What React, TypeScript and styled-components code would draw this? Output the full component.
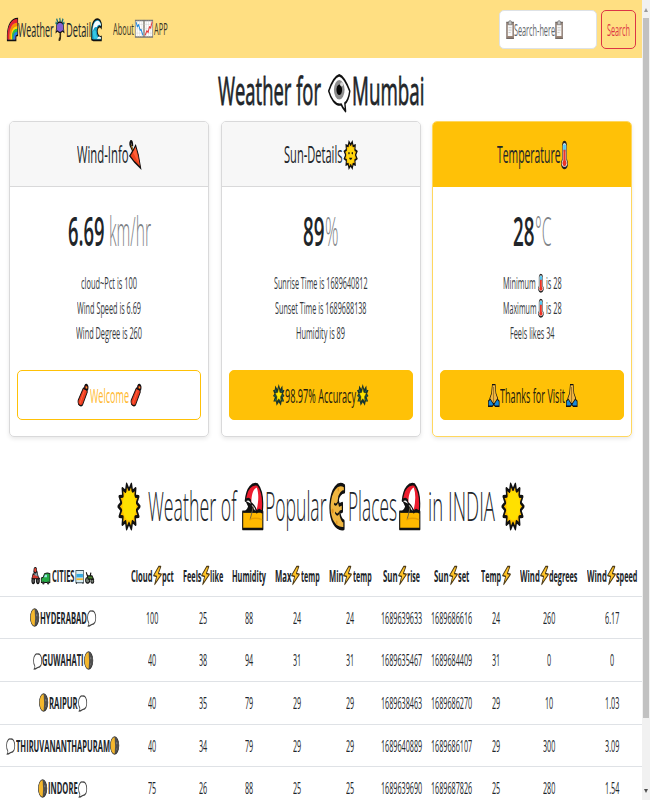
import React, { useLayoutEffect, useRef, useState } from "react";
import styled, { createGlobalStyle } from "styled-components";

const GlobalStyle = createGlobalStyle`
  * { box-sizing: border-box; }
  body { margin: 0; overflow: hidden; background: #fff; color: #212529; font-family: "Open Sans", "Noto Sans", sans-serif; }
`;

/* ---------- condensed text ---------- */

const FitBox = styled.span<{ $w: number }>`
  display: block;
  flex: none;
  width: ${(p) => p.$w}px;
  text-align: left;
`;

const FitText = styled.span`
  display: inline-block;
  vertical-align: top;
  white-space: pre;
  transform-origin: 0 50%;
`;

function Fit({ w, children }: { w: number; children: string }) {
  const ref = useRef<HTMLSpanElement>(null);
  const [scale, setScale] = useState(0.5);
  useLayoutEffect(() => {
    const el = ref.current;
    if (!el) return;
    el.style.transform = "none";
    const next = w / el.getBoundingClientRect().width;
    el.style.transform = `scaleX(${next})`;
    setScale(next);
  }, [w, children]);
  return (
    <FitBox $w={w}>
      <FitText ref={ref} style={{ transform: `scaleX(${scale})` }}>
        {children}
      </FitText>
    </FitBox>
  );
}

/* ---------- emoji drawings ---------- */

const K = "#111";

const sunRays = (n: number, r1: number, r2: number) =>
  Array.from({ length: n * 2 }, (_, i) => {
    const a = (i * Math.PI) / n - Math.PI / 2 + Math.PI / n;
    const r = i % 2 ? r2 : r1;
    return `${(16 + r * Math.cos(a)).toFixed(2)},${(16 + r * Math.sin(a)).toFixed(2)}`;
  }).join(" ");

const drawings: Record<string, React.ReactNode> = {
  rainbow: (
    <g>
      <path d="M1 31V24C2 10 12 1 31 1V24L26 25V31Z" fill="#8038c0" stroke={K} strokeWidth="2.5" />
      <g fill="none">
        <path d="M4 30V24C5 12 14 4 30 4" stroke="#e8222e" strokeWidth="5" />
        <path d="M9 30V24C10 15 17 9 30 9" stroke="#ff8c00" strokeWidth="5" />
        <path d="M13 30V24C14 18 20 13 30 13" stroke="#ffe000" strokeWidth="4" />
        <path d="M17 30V25C18 20 23 17 30 17" stroke="#28c840" strokeWidth="4" />
        <path d="M21 30V26C22 23 25 21 30 21" stroke="#1989e8" strokeWidth="4" />
      </g>
    </g>
  ),
  umbrella: (
    <g>
      <path d="M17 16V26Q17 31 12 29" fill="none" stroke="#3b2a12" strokeWidth="5" />
      <path d="M3 20L6 8Q16 3 26 8L29 20L24 18L19 20H13L8 18Z" fill="#8561d2" stroke={K} strokeWidth="2" />
      <path d="M5 1L9 6M15 0L17 5M26 1L22 6M2 6L7 9M30 6L25 9" stroke="#116d7a" strokeWidth="3.5" />
    </g>
  ),
  wave: (
    <g>
      <path d="M2 30V16C3 5 13 0 22 2C29 3 32 9 30 14C26 10 19 12 18 18C18 24 25 27 30 26V31H7Z" fill="#179fc6" stroke={K} strokeWidth="2.5" />
      <path d="M5 17C6 7 14 3 22 4C27 6 29 8 29 11C25 8 19 9 17 13C13 12 9 12 5 19Z" fill="#f4fbff" />
      <path d="M5 20C9 16 12 17 14 18C14 25 20 29 27 29H8Z" fill="#36c8e4" />
      <path d="M18 28Q23 24 29 27V29H18" fill="#fff" />
    </g>
  ),
  down: (
    <g>
      <path d="M1 1H31V31H1Z" fill="#fff" stroke="#777" strokeWidth="2.5" />
      <path d="M8 1V31M16 1V31M24 1V31M1 8H31M1 16H31M1 24H31" stroke="#ccc" strokeWidth="1" />
      <path d="M4 4L8 12L13 9L18 18L22 18L28 28" fill="none" stroke="#2189dd" strokeWidth="3.2" />
    </g>
  ),
  up: (
    <g>
      <path d="M1 1H31V31H1Z" fill="#fff" stroke="#777" strokeWidth="2.5" />
      <path d="M8 1V31M16 1V31M24 1V31M1 8H31M1 16H31M1 24H31" stroke="#ccc" strokeWidth="1" />
      <path d="M4 28L10 20L15 22L19 13L24 14L29 3" fill="none" stroke="#e8393b" strokeWidth="3.2" />
    </g>
  ),
  clipboard: (
    <g opacity=".75">
      <path d="M2 4H30V31H2Z" fill="#795b49" stroke="#453831" strokeWidth="2" />
      <path d="M7 8H25V27H7Z" fill="#f6f6f6" />
      <path d="M9 5Q10 1 16 1Q22 1 23 5V8H9Z" fill="#aaa" stroke="#444" strokeWidth="1.5" />
      <path d="M10 13H22M10 17H22M10 21H18" stroke="#999" strokeWidth="1.6" />
    </g>
  ),
  eye: (
    <g>
      <path d="M16 1C22 2 27 8 31 14C30 19 27 23 24 24L25 30.5Q20 27 19 25C10 26 4 20 1 14C5 7 10 2 16 1Z" fill="#fff" stroke={K} strokeWidth="2" strokeLinejoin="round" />
      <ellipse cx="16" cy="13" rx="7.6" ry="8" fill="#8d8d8d" />
      <ellipse cx="16" cy="13" rx="4" ry="4.3" fill="#080808" />
      <ellipse cx="19.5" cy="8.5" rx="2.2" ry="1.8" fill="#d8d8d8" />
    </g>
  ),
  closedUmbrella: (
    <g>
      <path d="M11 12L5 6Q1 3 4 1Q9 0 9 6" fill="none" stroke={K} strokeWidth="4" />
      <path d="M10 10L5 5" stroke="#d6921a" strokeWidth="1.4" />
      <path d="M17 5L24 16L30 31L14 24L2 17L10 11Z" fill="#ef431e" stroke={K} strokeWidth="2.2" />
      <path d="M17 8L27 27L10 13Z" fill="#ff6038" />
    </g>
  ),
  sunFace: (
    <g>
      <polygon points={sunRays(12, 15.6, 11.8)} fill="#f6b900" stroke={K} strokeWidth="2.6" />
      <circle cx="16" cy="16" r="10" fill="#ffd60f" />
      <ellipse cx="12" cy="14" rx="1.7" ry="1.3" fill={K} />
      <ellipse cx="20" cy="14" rx="1.7" ry="1.3" fill={K} />
      <path d="M12 19Q16 24 20 19Z" fill={K} />
    </g>
  ),
  sun: (
    <g>
      <polygon points={sunRays(14, 15.6, 11.4)} fill="#ffc000" stroke={K} strokeWidth="2.2" strokeLinejoin="round" />
      <circle cx="16.5" cy="15.5" r="10" fill="#ffe000" />
    </g>
  ),
  thermometer: (
    <g>
      <path d="M6 5Q8 1 16 1Q24 1 26 5V21Q31 24 30 27Q26 31 16 31Q6 31 2 27Q1 24 6 21Z" fill="#e5e5e5" stroke="#222" strokeWidth="2.5" />
      <path d="M10 4H22V12H10Z" fill="#50c8f4" />
      <path d="M11 10H21V22Q26 24 25 26Q21 29 16 29Q11 29 7 26Q6 24 11 22Z" fill="#ed3527" />
    </g>
  ),
  firecracker: (
    <g>
      <path d="M17 6Q25 5 28 11L15 29Q10 32 4 28Q2 25 3 23Z" fill="#ef3d20" stroke={K} strokeWidth="2.2" />
      <path d="M20 9L8 27" stroke="#ff6844" strokeWidth="2" />
      <path d="M21 7Q19 1 26 1Q32 3 29 8Z" fill="#a9281c" stroke={K} strokeWidth="2.5" />
      <circle cx="26" cy="5" r="1.5" fill="#ffb72b" />
    </g>
  ),
  glow: (
    <g>
      <path d="M16 0L20 7L26 2L27 8L32 9L28 14L32 17L27 19L31 25L24 25L22 31L16 26L10 31L8 25L1 25L5 19L0 17L4 14L0 9L5 8L6 2L12 7Z" fill="#17352f" />
      <path d="M5 8L9 12M27 8L23 12M3 17L8 17M29 17L24 17M5 24L9 21M27 24L23 21" stroke="#28735d" strokeWidth="1.5" />
      <polygon points="16,5 19,12 26,13 21,18 22,25 16,21 10,25 11,18 6,13 13,12" fill="#ffe500" stroke="#443900" strokeWidth=".8" />
    </g>
  ),
  hands: (
    <g>
      <path d="M1 31V24L8 20L16 27L24 20L31 24V31H20L16 28L12 31Z" fill="#1689dc" stroke={K} strokeWidth="2" />
      <path d="M16 1H20L22 13L27 20L18 27H14L5 20L10 13L12 1Z" fill="#f2b741" stroke={K} strokeWidth="1.7" />
      <path d="M16 4V25" stroke="#5f4015" strokeWidth="1.5" />
    </g>
  ),
  beach: (
    <g strokeLinejoin="round">
      <path d="M1 19.5H31V31.3H1Z" fill="#ffb900" stroke={K} strokeWidth="1.6" />
      <path d="M5 12C7 3 15 0 23 1C30 5 32 12 30 20C27 18 24 18 22 20C21 17 17 14 14 14C13 11 9 10 5 12Z" fill="#ed1c2e" stroke={K} strokeWidth="1.8" />
      <path d="M22 3C17 4 14 8 14 13Q19 15 22 18C25 12 25 7 22 3Z" fill="#fff" />
      <path d="M5 12L13 14L21 20H2Q8 18 9 16Z" fill={K} />
      <path d="M17 16L12 25" stroke="#6d6243" strokeWidth="1.2" />
      <path d="M11 25Q20 23 30 25" stroke="#e8a000" fill="none" />
    </g>
  ),
  moonFace: (
    <g>
      <path d="M30 2C17-1 4 4 2 15C1 25 12 32 29 31V26C25 26 22 23 21 20L26 19V14L20 15L18 12C18 8 25 6 30 6Z" fill="#efb640" stroke={K} strokeWidth="2.4" strokeLinejoin="round" />
      <path d="M10 14Q14 16 17 13M12 20Q16 23 20 20" stroke={K} strokeWidth="1.5" fill="none" />
      <ellipse cx="7" cy="19" rx="2.2" ry="1.7" fill="#df941f" />
      <circle cx="18" cy="4.5" r="1.4" fill="#df941f" />
      <circle cx="15" cy="27" r="1.5" fill="#df941f" />
    </g>
  ),
  bolt: (
    <path d="M20 1L2 16L13 17.5L6 31L30 14L19 12.5L28 1Z" fill="#ffc326" stroke="#4c3a18" strokeWidth="2.6" strokeLinejoin="round" />
  ),
  moon: (
    <g>
      <circle cx="16" cy="16" r="14.5" fill="#505050" stroke="#333" strokeWidth="2.4" />
      <path d="M16 2A13.5 14 0 0 0 16 30Q19 16 16 2Z" fill="#f4b72d" />
      <circle cx="23" cy="12" r="2" fill="#777" />
      <circle cx="23" cy="22" r="1.5" fill="#777" />
    </g>
  ),
  bubble: (
    <path d="M17 2C25 1 30 7 30 14C31 21 26 27 18 27C13 27 11 31 4 30Q8 27 6 24C0 19 1 8 7 4Q11 1 17 2Z" fill="#fff" stroke="#444" strokeWidth="2.6" />
  ),
  motorcycle: (
    <g>
      <circle cx="8" cy="26" r="5" fill="#555" stroke={K} strokeWidth="3" />
      <circle cx="24" cy="26" r="5" fill="#555" stroke={K} strokeWidth="3" />
      <path d="M3 21L7 13L20 14L30 22H6Z" fill="#d33b31" stroke={K} strokeWidth="2" />
      <path d="M11 15L10 8H21L25 18" fill="#8a99a3" stroke={K} strokeWidth="2" />
      <circle cx="15" cy="6" r="5" fill="#e84132" stroke={K} strokeWidth="2" />
    </g>
  ),
  car: (
    <g>
      <path d="M1 15L7 13L12 4Q22 1 30 4V26H1Z" fill="#23a844" stroke={K} strokeWidth="2.5" />
      <path d="M10 13L14 7H20V13Z" fill="#9ce4eb" />
      <circle cx="8" cy="27" r="4" fill="#333" />
      <circle cx="24" cy="27" r="4" fill="#333" />
    </g>
  ),
  bus: (
    <g>
      <path d="M3 1H29V29H3Z" fill="#d8eef5" stroke="#3e525b" strokeWidth="2.5" />
      <path d="M5 9H27V17H5Z" fill="#35a9e0" />
      <path d="M5 19H27V23H5Z" fill="#f0b834" />
      <path d="M5 28V32M27 28V32" stroke="#333" strokeWidth="3" />
    </g>
  ),
  tractor: (
    <g>
      <circle cx="9" cy="23" r="7" fill="#788277" stroke={K} strokeWidth="3" />
      <circle cx="25" cy="25" r="5" fill="#788277" stroke={K} strokeWidth="3" />
      <path d="M4 3L9 12H24L29 20H11Z" fill="#4c862d" stroke={K} strokeWidth="3" />
      <path d="M18 12L20 4" stroke={K} strokeWidth="4" />
    </g>
  ),
};

const Glyph = styled.svg`
  display: block;
  flex: none;
  overflow: visible;
`;

const Drop = styled.span<{ $y: number }>`
  display: block;
  flex: none;
  margin-top: ${(p) => p.$y}px;
`;

function Emoji({ name, w, h, drop = 0 }: { name: string; w: number; h: number; drop?: number }) {
  return (
    <Drop $y={drop}>
      <Glyph width={w} height={h} viewBox="0 0 32 32" preserveAspectRatio="none">
        {drawings[name]}
      </Glyph>
    </Drop>
  );
}

/* ---------- page frame ---------- */

const Page = styled.div`
  display: flex;
  width: 650px;
  height: 800px;
  overflow: hidden;
`;

const Content = styled.main`
  flex: none;
  width: 642px;
  height: 800px;
  overflow: hidden;
`;

const ScrollTrack = styled.aside`
  display: flex;
  flex-direction: column;
  align-items: center;
  width: 8px;
  height: 800px;
  padding: 8px 0 7px;
  background: #f1f1f1;
`;

const Arrow = styled.i<{ $down?: boolean }>`
  width: 0;
  height: 0;
  border: 2px solid transparent;
  border-top: ${(p) => (p.$down ? "4px solid #505050" : "0")};
  border-bottom: ${(p) => (p.$down ? "0" : "4px solid #9b9b9b")};
`;

const Thumb = styled.div`
  width: 6px;
  height: 700px;
  margin: 6px 0 auto;
  background: #c1c1c1;
`;

const Label = styled.span<{ $gap?: number }>`
  display: flex;
  align-items: center;
  justify-content: center;
  gap: ${(p) => p.$gap ?? 1}px;
`;

/* ---------- navigation ---------- */

const Navbar = styled.header`
  display: flex;
  align-items: center;
  height: 58px;
  padding: 0 6px 0 6.5px;
  background: #ffdf82;
`;

const Brand = styled.div`
  font-size: 20.5px;
  line-height: 30px;
  margin-right: 11px;
`;

const NavLink = styled.div`
  font-size: 16.5px;
  line-height: 26px;
  color: #3c3729;
`;

const SearchForm = styled.div`
  display: flex;
  gap: 4px;
  margin-left: auto;
`;

const SearchField = styled.div`
  display: flex;
  align-items: center;
  width: 98px;
  height: 39px;
  padding-left: 5.5px;
  border: 1px solid #dee2e6;
  border-radius: 5px;
  background: #fff;
  color: #60656a;
  font-size: 16.5px;
`;

const SearchButton = styled.button`
  display: flex;
  align-items: center;
  justify-content: center;
  width: 35px;
  height: 39px;
  padding: 0;
  border: 1px solid #dc3545;
  border-radius: 5px;
  background: transparent;
  color: #dc3545;
  font: 400 16.5px "Open Sans", sans-serif;
`;

/* ---------- cards ---------- */

const Title = styled.h1`
  display: flex;
  justify-content: center;
  height: 63px;
  margin: 0;
  padding-top: 1px;
  font-size: 39px;
  font-weight: 500;
  line-height: 50px;
  -webkit-text-stroke: 0.8px #212529;
`;

const Cards = styled.section`
  display: grid;
  grid-template-columns: repeat(3, 200px);
  column-gap: 11.5px;
  padding-left: 9.4px;
`;

const Card = styled.article<{ $accent?: boolean }>`
  height: 316px;
  border: 1px solid ${(p) => (p.$accent ? "#ffd75e" : "#d9d9da")};
  border-radius: 5px;
  box-shadow: 0 2px 4px rgba(0, 0, 0, 0.09);
  overflow: hidden;
`;

const CardHead = styled.h4<{ $accent?: boolean }>`
  display: flex;
  align-items: center;
  justify-content: center;
  height: 65px;
  margin: 0;
  padding-top: 1px;
  border-bottom: 1px solid ${(p) => (p.$accent ? "#ffc107" : "#d9d9da")};
  background: ${(p) => (p.$accent ? "#ffc107" : "#f7f7f7")};
  font-size: 24px;
  line-height: 34px;
  font-weight: 400;
`;

const HeadText = styled.span`
  margin-top: -1px;
`;

const CardBody = styled.div`
  padding: 17px 7px 0;
`;

const Figure = styled.div`
  display: flex;
  justify-content: center;
  height: 54px;
  font-size: 39.5px;
  font-weight: 600;
  line-height: 54px;
`;

const Unit = styled.small`
  font-size: 39.5px;
  font-weight: 300;
  color: #7e8286;
`;

const Facts = styled.div`
  display: flex;
  flex-direction: column;
  margin: 13px 0 24px;
  font-size: 16.2px;
  line-height: 25px;
  color: #34383c;
`;

const CardButton = styled.button<{ $outline?: boolean }>`
  display: flex;
  align-items: center;
  justify-content: center;
  width: 184px;
  height: 50px;
  padding: 1px 0 0;
  border: 1px solid #ffc107;
  border-radius: 5px;
  background: ${(p) => (p.$outline ? "#fff" : "#ffc107")};
  color: ${(p) => (p.$outline ? "#ffb92e" : "#1d1a10")};
  font: 400 20px "Open Sans", sans-serif;
`;

/* ---------- table ---------- */

const Subtitle = styled.h2`
  display: flex;
  align-items: center;
  height: 60px;
  margin: 39px 0 20px;
  padding-left: 117.5px;
  font-size: 39.5px;
  font-weight: 300;
  line-height: 60px;
`;

const Gap = styled.span<{ $w: number }>`
  flex: none;
  width: ${(p) => p.$w}px;
`;

const Row = styled.div<{ $head?: boolean }>`
  display: grid;
  grid-template-columns: 126px 52.5px 49px 43px 53px 53px 50px 50.5px 38px 68px 59px;
  align-items: center;
  height: ${(p) => (p.$head ? "40.7px" : "42.7px")};
  border-bottom: 1px solid #dfe2e6;
  font-size: 16px;
  line-height: 22px;
  font-weight: ${(p) => (p.$head ? 700 : 400)};
`;

const Strong = styled.span`
  font-weight: 700;
`;

const columns: [string, number, string, number][] = [
  ["Cloud", 21.5, "pct", 11.7],
  ["Feels", 18.5, "like", 13.3],
  ["Humidity", 34, "", 0],
  ["Max", 16.5, "temp", 18.7],
  ["Min", 14.5, "temp", 18.7],
  ["Sun", 14.7, "rise", 13],
  ["Sun", 14.7, "set", 11.3],
  ["Temp", 20, "", -1],
  ["Wind", 19.8, "degrees", 28.3],
  ["Wind", 19.8, "speed", 21.3],
];

const cities: [string, number, boolean, string[]][] = [
  ["HYDERABAD", 47, true, ["100", "25", "88", "24", "24", "1689639633", "1689686616", "24", "260", "6.17"]],
  ["GUWAHATI", 41.5, false, ["40", "38", "94", "31", "31", "1689635467", "1689684409", "31", "0", "0"]],
  ["RAIPUR", 28.7, true, ["40", "35", "79", "29", "29", "1689638463", "1689686270", "29", "10", "1.03"]],
  ["THIRUVANANTHAPURAM", 94, false, ["40", "34", "79", "29", "29", "1689640889", "1689686107", "29", "300", "3.09"]],
  ["INDORE", 29.7, true, ["75", "26", "88", "25", "25", "1689639690", "1689687826", "25", "280", "1.54"]],
];

const digitsWidth = (s: string) => s.replace(".", "").length * 4.12 + (s.includes(".") ? 2 : 0);

export default function App() {
  return (
    <>
      <GlobalStyle />
      <Page>
        <Content>
          <Navbar>
            <Brand>
              <Label $gap={0.8}>
                <Emoji name="rainbow" w={11} h={23} />
                <Fit w={35.7}>Weather</Fit>
                <Emoji name="umbrella" w={10} h={23} />
                <Fit w={25}>Detail</Fit>
                <Emoji name="wave" w={11} h={23} />
              </Label>
            </Brand>
            <NavLink>
              <Label $gap={0.5}>
                <Fit w={20.9}>About</Fit>
                <Emoji name="down" w={9} h={17.5} />
                <Emoji name="up" w={9} h={17.5} />
                <Fit w={13.7}>APP</Fit>
              </Label>
            </NavLink>
            <SearchForm>
              <SearchField>
                <Label $gap={0.3}>
                  <Emoji name="clipboard" w={8.2} h={19} />
                  <Fit w={41}>Search-here</Fit>
                  <Emoji name="clipboard" w={8.2} h={19} />
                </Label>
              </SearchField>
              <SearchButton>
                <Fit w={23}>Search</Fit>
              </SearchButton>
            </SearchForm>
          </Navbar>

          <Title>
            <Label $gap={0}>
              <Fit w={103}>Weather for</Fit>
              <Gap $w={7} />
              <Emoji name="eye" w={22.5} h={39} drop={6} />
              <Gap $w={1} />
              <Fit w={72.5}>Mumbai</Fit>
            </Label>
          </Title>

          <Cards>
            <Card>
              <CardHead>
                <Label>
                  <HeadText><Fit w={51.5}>Wind-Info</Fit></HeadText>
                  <Emoji name="closedUmbrella" w={12.5} h={28} />
                </Label>
              </CardHead>
              <CardBody>
                <Figure>
                  <Label $gap={5}>
                    <Fit w={36.5}>6.69</Fit>
                    <Unit><Fit w={42}>km/hr</Fit></Unit>
                  </Label>
                </Figure>
                <Facts>
                  <Label><Fit w={56}>cloud~Pct is 100</Fit></Label>
                  <Label><Fit w={64}>Wind Speed is 6.69</Fit></Label>
                  <Label><Fit w={66}>Wind Degree is 260</Fit></Label>
                </Facts>
                <CardButton $outline>
                  <Label>
                    <Emoji name="firecracker" w={11.8} h={23} />
                    <Fit w={39}>Welcome</Fit>
                    <Emoji name="firecracker" w={11.8} h={23} />
                  </Label>
                </CardButton>
              </CardBody>
            </Card>

            <Card>
              <CardHead>
                <Label>
                  <HeadText><Fit w={58.5}>Sun-Details</Fit></HeadText>
                  <Emoji name="sunFace" w={13.3} h={28} />
                </Label>
              </CardHead>
              <CardBody>
                <Figure>
                  <Label $gap={0}>
                    <Fit w={21.5}>89</Fit>
                    <Unit><Fit w={13.5}>%</Fit></Unit>
                  </Label>
                </Figure>
                <Facts>
                  <Label><Fit w={93.5}>Sunrise Time is 1689640812</Fit></Label>
                  <Label><Fit w={91.5}>Sunset Time is 1689688138</Fit></Label>
                  <Label><Fit w={49}>Humidity is 89</Fit></Label>
                </Facts>
                <CardButton>
                  <Label $gap={0.5}>
                    <Emoji name="glow" w={11.5} h={22.5} />
                    <Fit w={71}>98.97% Accuracy</Fit>
                    <Emoji name="glow" w={11.5} h={22.5} />
                  </Label>
                </CardButton>
              </CardBody>
            </Card>

            <Card $accent>
              <CardHead $accent>
                <Label>
                  <HeadText><Fit w={63.5}>Temperature</Fit></HeadText>
                  <Emoji name="thermometer" w={7} h={28} />
                </Label>
              </CardHead>
              <CardBody>
                <Figure>
                  <Label $gap={0}>
                    <Fit w={21.5}>28</Fit>
                    <Unit><Fit w={16.5}>°C</Fit></Unit>
                  </Label>
                </Figure>
                <Facts>
                  <Label $gap={2}>
                    <Fit w={32.7}>Minimum</Fit>
                    <Emoji name="thermometer" w={5.8} h={18.5} />
                    <Fit w={15.7}>is 28</Fit>
                  </Label>
                  <Label $gap={2}>
                    <Fit w={33.5}>Maximum</Fit>
                    <Emoji name="thermometer" w={5.8} h={18.5} />
                    <Fit w={15.7}>is 28</Fit>
                  </Label>
                  <Label><Fit w={44.5}>Feels likes 34</Fit></Label>
                </Facts>
                <CardButton>
                  <Label $gap={0.7}>
                    <Emoji name="hands" w={11.5} h={23} />
                    <Fit w={65}>Thanks for Visit</Fit>
                    <Emoji name="hands" w={11.5} h={23} />
                  </Label>
                </CardButton>
              </CardBody>
            </Card>
          </Cards>

          <Subtitle>
            <Emoji name="sun" w={22} h={47} />
            <Gap $w={8} />
            <Fit w={88.5}>Weather of</Fit>
            <Gap $w={6.3} />
            <Emoji name="beach" w={21.5} h={47} />
            <Gap $w={1.5} />
            <Fit w={61.5}>Popular</Fit>
            <Gap $w={2} />
            <Emoji name="moonFace" w={16.5} h={47} />
            <Gap $w={3} />
            <Fit w={49}>Places</Fit>
            <Gap $w={2} />
            <Emoji name="beach" w={21.5} h={47} />
            <Gap $w={7.5} />
            <Fit w={67}>in INDIA</Fit>
            <Gap $w={6.5} />
            <Emoji name="sun" w={22} h={47} />
          </Subtitle>

          <Row $head>
            <Label $gap={0.8}>
              <Emoji name="motorcycle" w={9.2} h={17} />
              <Emoji name="car" w={9.5} h={13} drop={5} />
              <Fit w={22.5}>CITIES</Fit>
              <Emoji name="bus" w={9.4} h={14} drop={2} />
              <Emoji name="tractor" w={9.4} h={13} drop={4} />
            </Label>
            {columns.map(([a, aw, b, bw], i) => (
              <Label key={i} $gap={0.1}>
                <Fit w={aw}>{a}</Fit>
                {bw !== 0 && <Emoji name="bolt" w={9} h={19} />}
                {bw > 0 && <Fit w={bw}>{b}</Fit>}
              </Label>
            ))}
          </Row>
          {cities.map(([name, w, moonFirst, values]) => (
            <Row key={name}>
              <Label $gap={0.4}>
                <Emoji name={moonFirst ? "moon" : "bubble"} w={9.3} h={moonFirst ? 19 : 17} drop={moonFirst ? 0 : 2} />
                <Strong><Fit w={w}>{name}</Fit></Strong>
                <Emoji name={moonFirst ? "bubble" : "moon"} w={9.3} h={moonFirst ? 17 : 19} drop={moonFirst ? 2 : 0} />
              </Label>
              {values.map((v, i) => (
                <Label key={i}><Fit w={digitsWidth(v)}>{v}</Fit></Label>
              ))}
            </Row>
          ))}
        </Content>
        <ScrollTrack>
          <Arrow />
          <Thumb />
          <Arrow $down />
        </ScrollTrack>
      </Page>
    </>
  );
}
